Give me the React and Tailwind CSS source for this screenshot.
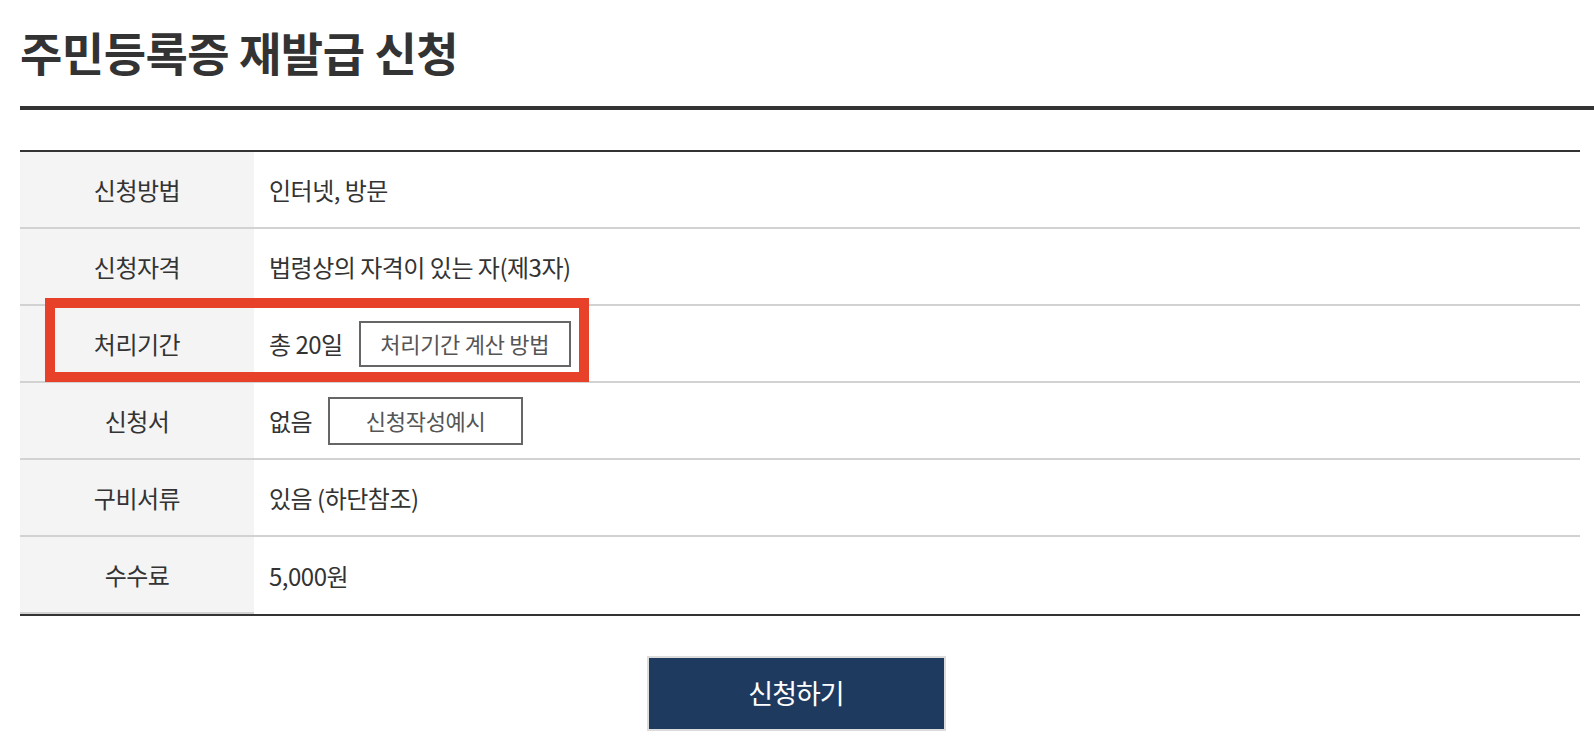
import React from "react";

const rows = [
  { label: "신청방법", value: "인터넷, 방문" },
  { label: "신청자격", value: "법령상의 자격이 있는 자(제3자)" },
  { label: "처리기간", value: "총 20일", button: "처리기간 계산 방법", btnWidth: "w-[212px] h-[46px]", highlight: true },
  { label: "신청서", value: "없음", button: "신청작성예시", btnWidth: "w-[195px] h-[48px]" },
  { label: "구비서류", value: "있음 (하단참조)" },
  { label: "수수료", value: "5,000원" },
];

const App = () => {
  return (
    <div className="min-h-screen bg-white pl-5 text-[#333] font-['Noto_Sans_CJK_KR','Noto_Sans',sans-serif]">
      {/* Title */}
      <div className="h-[110px] flex items-center border-b-4 border-[#333] pb-1">
        <h1 className="text-[46px] font-bold leading-none tracking-[-0.5px] text-[#333]">
          주민등록증 재발급 신청
        </h1>
      </div>

      {/* Info table */}
      <div className="mt-10 w-[1560px] border-t-2 border-b-2 border-[#333]">
        {rows.map((row, i) => (
          <div key={row.label} className="relative flex">
            <div className="w-[234px] h-[77px] flex items-center justify-center bg-[#f4f4f4] text-[24px] tracking-[-0.5px] border-b-2 border-[#d2d2d2]">
              {row.label}
            </div>
            <div
              className={
                i === rows.length - 1
                  ? "flex-1 h-[77px] flex items-center pl-[15px] text-[24px] tracking-[-0.5px]"
                  : "flex-1 h-[77px] flex items-center pl-[15px] text-[24px] tracking-[-0.5px] border-b-2 border-[#d2d2d2]"
              }
            >
              <span>{row.value}</span>
              {row.button && (
                <button
                  className={`${row.btnWidth} ml-4 flex items-center justify-center border-2 border-[#666] bg-white text-[22px] tracking-[-0.3px] text-[#555]`}
                >
                  {row.button}
                </button>
              )}
            </div>

            {/* Highlight box */}
            {row.highlight && (
              <div className="absolute left-[25px] -top-2 w-[544px] h-[84px] border-[10px] border-[#e8412a] pointer-events-none" />
            )}
          </div>
        ))}
      </div>

      {/* Submit */}
      <div className="w-[1560px] flex justify-center pr-2 mt-10">
        <button className="w-[299px] h-[75px] bg-[#1e3a5f] border-2 border-[#dcdcdc] text-white text-[27px] tracking-[-1px]">
          신청하기
        </button>
      </div>
    </div>
  );
};

export default App;
